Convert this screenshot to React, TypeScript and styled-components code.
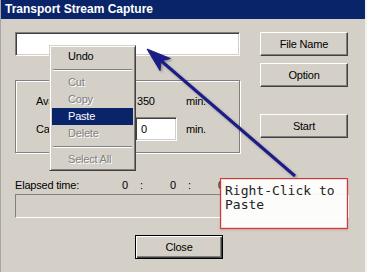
import styled, { createGlobalStyle } from "styled-components";

const uiFont = `Tahoma, "Liberation Sans", Arial, sans-serif`;

const GlobalStyle = createGlobalStyle`
  html, body {
    margin: 0;
    padding: 0;
    background: #d4d0c8;
  }
  body {
    font-family: ${uiFont};
    font-size: 11px;
    color: #000;
  }
`;

const Window = styled.div`
  position: relative;
  width: 367px;
  height: 272px;
  overflow: hidden;
  background: #d4d0c8;
  box-sizing: border-box;
  border-left: 1px solid #a8a5a0;
  border-right: 2px solid #f4f3f0;
`;

const TitleBar = styled.div`
  height: 19px;
  background: #0a246a;
  color: #fff;
  font-family: ${uiFont};
  font-weight: bold;
  font-size: 12px;
  line-height: 19px;
  padding-left: 4px;
`;

const Body = styled.div`
  padding: 13px 0 0 14px;
  display: flex;
  flex-direction: column;
  font-family: ${uiFont};
  font-size: 11px;
  letter-spacing: -0.2px;
`;

const TopSection = styled.div`
  display: flex;
  gap: 20px;
`;

const LeftColumn = styled.div`
  width: 225px;
  display: flex;
  flex-direction: column;
`;

const RightColumn = styled.div`
  width: 88px;
  display: flex;
  flex-direction: column;
`;

const Sunken = styled.div<{ $w?: number }>`
  box-sizing: border-box;
  height: 24px;
  width: ${(p) => (p.$w ? `${p.$w}px` : "100%")};
  background: #fff;
  border-style: solid;
  border-width: 1px;
  border-color: #808080 #fff #fff #808080;
  box-shadow: inset 1px 1px 0 #404040, inset -1px -1px 0 #d4d0c8;
  padding: 0 5px;
  line-height: 22px;
`;

const Button = styled.div<{ $gap?: number; $default?: boolean }>`
  box-sizing: border-box;
  height: 24px;
  width: 88px;
  margin-top: ${(p) => p.$gap ?? 0}px;
  display: flex;
  align-items: center;
  justify-content: center;
  background: #d4d0c8;
  font-size: 11px;
  border: 1px solid;
  border-color: ${(p) =>
    p.$default ? "#000" : "#fff #404040 #404040 #fff"};
  box-shadow: ${(p) =>
    p.$default
      ? "inset 1px 1px 0 #fff, inset -1px -1px 0 #404040, inset -2px -2px 0 #808080"
      : "inset -1px -1px 0 #808080"};
`;

const Frame = styled.div`
  box-sizing: border-box;
  margin-top: 24px;
  height: 73px;
  border: 1px solid #808080;
  box-shadow: inset 1px 1px 0 #fff, 1px 1px 0 #fff;
  padding: 8px 0 0 20px;
  display: grid;
  grid-template-columns: 99px 51px auto;
  grid-template-rows: 24px 24px;
  row-gap: 4px;
  align-items: center;
`;

const Label = styled.span`
  white-space: nowrap;
`;

const Value = styled.span`
  padding-left: 2px;
`;

const ElapsedRow = styled.div`
  margin-top: 26px;
  height: 13px;
  line-height: 13px;
  display: grid;
  grid-template-columns: 107px 18px 30px 18px 30px auto;
`;

const Progress = styled.div`
  box-sizing: border-box;
  margin-top: 2px;
  width: 334px;
  height: 24px;
  border: 1px solid;
  border-color: #808080 #fff #fff #808080;
`;

const CloseRow = styled.div`
  margin-top: 17px;
  padding-left: 120px;
`;

const Menu = styled.div`
  position: absolute;
  left: 48px;
  top: 45px;
  width: 87px;
  box-sizing: border-box;
  padding: 2px;
  background: #d4d0c8;
  border: 1px solid;
  border-color: #d4d0c8 #404040 #404040 #d4d0c8;
  box-shadow: inset 1px 1px 0 #fff, inset -1px -1px 0 #808080;
  font-family: ${uiFont};
  font-size: 11px;
  letter-spacing: -0.2px;
`;

const MenuItem = styled.div<{ $disabled?: boolean; $active?: boolean }>`
  height: 17px;
  line-height: 17px;
  padding-left: 16px;
  background: ${(p) => (p.$active ? "#0a246a" : "transparent")};
  color: ${(p) => (p.$active ? "#fff" : p.$disabled ? "#808080" : "#000")};
  text-shadow: ${(p) => (p.$disabled ? "1px 1px 0 #fff" : "none")};
`;

const Separator = styled.div`
  height: 9px;
  display: flex;
  align-items: center;
  padding: 0 1px;
  &::before {
    content: "";
    flex: 1;
    height: 1px;
    background: #808080;
    box-shadow: 0 1px 0 #fff;
  }
`;

const Callout = styled.div`
  position: absolute;
  left: 219px;
  top: 178px;
  width: 128px;
  height: 51px;
  box-sizing: border-box;
  border: 1px solid #c83c3c;
  background: rgba(255, 255, 255, 0.93);
  box-shadow: inset 0 0 0 1px #f4d4d4, 0 1px 2px rgba(200, 60, 60, 0.35);
  padding: 5px 0 0 4px;
  font-family: "DejaVu Sans Mono", "Liberation Mono", monospace;
  font-size: 13px;
  line-height: 14px;
  color: #222;
`;

const ArrowLayer = styled.svg`
  position: absolute;
  left: 0;
  top: 0;
  pointer-events: none;
`;

export default function App() {
  return (
    <>
      <GlobalStyle />
      <Window>
        <TitleBar>Transport Stream Capture</TitleBar>
        <Body>
          <TopSection>
            <LeftColumn>
              <Sunken />
              <Frame>
                <Label>Available time:</Label>
                <Value>350</Value>
                <span>min.</span>
                <Label>Capture time:</Label>
                <Sunken $w={42}>0</Sunken>
                <span>min.</span>
              </Frame>
            </LeftColumn>
            <RightColumn>
              <Button>File Name</Button>
              <Button $gap={7}>Option</Button>
              <Button $gap={27}>Start</Button>
            </RightColumn>
          </TopSection>
          <ElapsedRow>
            <span>Elapsed time:</span>
            <span>0</span>
            <span>:</span>
            <span>0</span>
            <span>:</span>
            <span>0</span>
          </ElapsedRow>
          <Progress />
          <CloseRow>
            <Button $default>Close</Button>
          </CloseRow>
        </Body>

        <Menu>
          <MenuItem>Undo</MenuItem>
          <Separator />
          <MenuItem $disabled>Cut</MenuItem>
          <MenuItem $disabled>Copy</MenuItem>
          <MenuItem $active>Paste</MenuItem>
          <MenuItem $disabled>Delete</MenuItem>
          <Separator />
          <MenuItem $disabled>Select All</MenuItem>
        </Menu>

        <ArrowLayer width="367" height="272" viewBox="0 0 367 272">
          <defs>
            <filter id="shadow" x="-10%" y="-10%" width="130%" height="130%">
              <feDropShadow dx="1.5" dy="1.5" stdDeviation="1" floodColor="#000" floodOpacity="0.3" />
            </filter>
          </defs>
          <g filter="url(#shadow)" fill="#1c1c86" stroke="#1c1c86">
            <line x1="294" y1="176" x2="158" y2="59" strokeWidth="3" />
            <polygon points="146,49 169.4,58.5 160,61 159,70.7" strokeWidth="1" strokeLinejoin="miter" />
          </g>
        </ArrowLayer>

        <Callout>
          Right-Click to
          <br />
          Paste
        </Callout>
      </Window>
    </>
  );
}
